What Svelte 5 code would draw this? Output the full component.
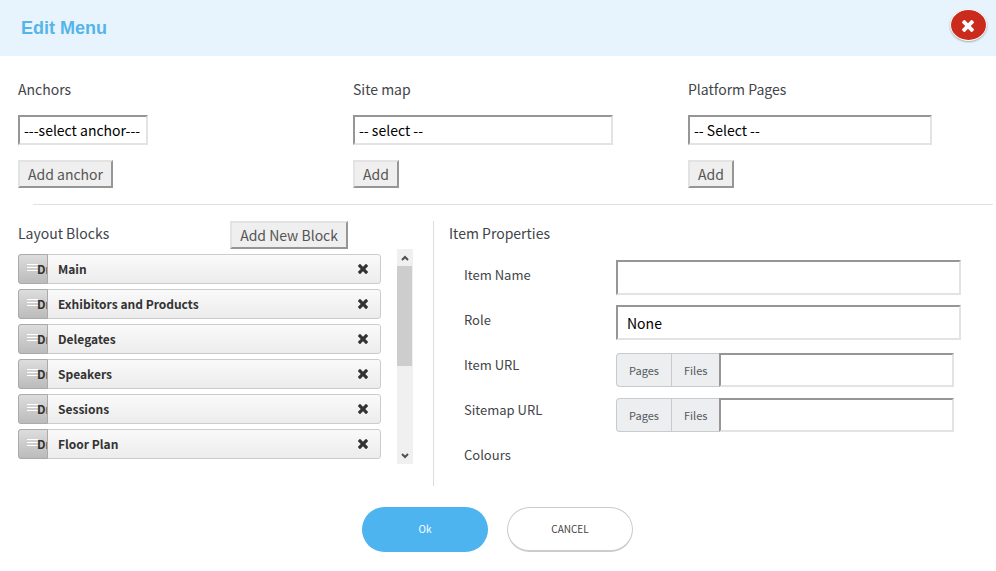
<script lang="ts">
	interface Source {
		id: string;
		label: string;
		placeholder: string;
		action: string;
	}

	const sources: Source[] = [
		{ id: 'anchors', label: 'Anchors', placeholder: '---select anchor---', action: 'Add anchor' },
		{ id: 'sitemap', label: 'Site map', placeholder: '-- select --', action: 'Add' },
		{ id: 'platform', label: 'Platform Pages', placeholder: '-- Select --', action: 'Add' }
	];

	let blocks = $state([
		'Main',
		'Exhibitors and Products',
		'Delegates',
		'Speakers',
		'Sessions',
		'Floor Plan'
	]);

	let itemName = $state('');
	let itemUrl = $state('');
	let sitemapUrl = $state('');

	function removeBlock(index: number) {
		blocks.splice(index, 1);
	}
</script>

{#snippet cross()}
	<svg class="cross" viewBox="302 366 1188 1188" aria-hidden="true">
		<path
			d="M1490 1322q0 40-28 68l-136 136q-28 28-68 28t-68-28l-294-294-294 294q-28 28-68 28t-68-28l-136-136q-28-28-28-68t28-68l294-294-294-294q-28-28-28-68t28-68l136-136q28-28 68-28t68 28l294 294 294-294q28-28 68-28t68 28l136 136q28 28 28 68t-28 68l-294 294 294 294q28 28 28 68z"
		/>
	</svg>
{/snippet}

<div class="dialog" role="dialog" aria-labelledby="dialog-title">
	<header class="dialog-header">
		<h1 id="dialog-title">Edit Menu</h1>
		<button type="button" class="close" aria-label="Close">{@render cross()}</button>
	</header>

	<section class="sources">
		{#each sources as source (source.id)}
			<div class="source">
				<label for={source.id}>{source.label}</label>
				<select id={source.id} class="field select-{source.id}">
					<option>{source.placeholder}</option>
				</select>
				<button type="button" class="btn">{source.action}</button>
			</div>
		{/each}
	</section>

	<hr />

	<div class="editor">
		<section class="layout">
			<div class="layout-head">
				<h2>Layout Blocks</h2>
				<button type="button" class="btn">Add New Block</button>
			</div>
			<div class="scroller">
				<ul class="blocks">
					{#each blocks as block, i (block)}
						<li class="block">
							<span class="handle">
								<svg viewBox="0 0 11 8" aria-hidden="true">
									<path d="M0 .5h11M0 3.5h11M0 6.5h11" />
								</svg>
								<span>Dr</span>
							</span>
							<span class="block-name">{block}</span>
							<button
								type="button"
								class="remove"
								aria-label="Remove {block}"
								onclick={() => removeBlock(i)}
							>
								{@render cross()}
							</button>
						</li>
					{/each}
				</ul>
				<div class="scrollbar" aria-hidden="true">
					<svg viewBox="0 0 8 6"><path d="M1 5l3-3 3 3" /></svg>
					<div class="thumb"></div>
					<svg viewBox="0 0 8 6"><path d="M1 1l3 3 3-3" /></svg>
				</div>
			</div>
		</section>

		<section class="properties">
			<h2>Item Properties</h2>
			<div class="row">
				<label for="item-name">Item Name</label>
				<input id="item-name" class="field" type="text" bind:value={itemName} />
			</div>
			<div class="row">
				<label for="role">Role</label>
				<select id="role" class="field">
					<option>None</option>
				</select>
			</div>
			<div class="row">
				<label for="item-url">Item URL</label>
				<div class="group">
					<button type="button">Pages</button>
					<button type="button">Files</button>
					<input id="item-url" class="field" type="text" bind:value={itemUrl} />
				</div>
			</div>
			<div class="row">
				<label for="sitemap-url">Sitemap URL</label>
				<div class="group">
					<button type="button">Pages</button>
					<button type="button">Files</button>
					<input id="sitemap-url" class="field" type="text" bind:value={sitemapUrl} />
				</div>
			</div>
			<div class="row">
				<span>Colours</span>
			</div>
		</section>
	</div>

	<footer class="dialog-footer">
		<button type="button" class="pill primary">Ok</button>
		<button type="button" class="pill">CANCEL</button>
	</footer>
</div>

<style>
	:global(body) {
		margin: 0;
		background: #fff;
	}

	.dialog,
	.dialog * {
		box-sizing: border-box;
	}

	.dialog {
		font-family: 'Noto Sans CJK SC', 'Open Sans', sans-serif;
		font-size: 14px;
		line-height: 20px;
		color: #414549;
	}

	button,
	select,
	input {
		margin: 0;
		font-family: inherit;
		font-size: inherit;
		line-height: inherit;
	}

	h1,
	h2 {
		margin: 0;
	}

	h2 {
		padding-top: 2px;
		font-size: 14px;
		font-weight: 400;
	}

	/* Header */
	.dialog-header {
		display: flex;
		align-items: center;
		justify-content: space-between;
		height: 56px;
		padding: 0 9px 6px 21px;
		background: #e7f4fd;
	}

	h1 {
		padding-top: 6px;
		font-family: 'Liberation Sans', Arial, sans-serif;
		font-size: 18px;
		font-weight: 700;
		color: #55b5ea;
	}

	.close {
		display: flex;
		align-items: center;
		justify-content: center;
		width: 37px;
		height: 32px;
		padding: 1px 2px 0 0;
		border: 1px solid #fff;
		border-radius: 50%;
		background: #cb2b1d;
		box-shadow: 0 1px 2px rgba(0, 0, 0, 0.3);
	}

	.cross {
		display: block;
		width: 10px;
		height: 10px;
		fill: currentColor;
	}

	.close .cross {
		width: 12px;
		height: 12px;
		color: #fff;
	}

	/* Pickers */
	.sources {
		display: grid;
		grid-template-columns: 335fr 335fr 308fr;
		padding: 23px 0 16px 18px;
	}

	.source {
		display: flex;
		flex-direction: column;
		align-items: flex-start;
	}

	.field {
		appearance: none;
		border: 2px solid;
		border-color: #969696 #e3e3e3 #e3e3e3 #969696;
		border-radius: 0;
		background: #fff;
		color: #000;
		outline: none;
	}

	.source .field {
		height: 30px;
		margin: 16px 0 15px;
		padding: 0 4px;
	}

	.select-anchors {
		width: 130px;
	}

	.select-sitemap {
		width: 260px;
	}

	.select-platform {
		width: 244px;
	}

	.btn {
		height: 28px;
		padding: 0 8px;
		border: 2px solid;
		border-color: #e3e3e3 #969696 #969696 #e3e3e3;
		background: #efefef;
		color: #555;
	}

	hr {
		height: 1px;
		margin: 0 3px 16px 33px;
		border: 0;
		background: #e1e1e1;
	}

	/* Editor */
	.editor {
		display: grid;
		grid-template-columns: 416fr 562fr;
		padding-left: 18px;
	}

	.layout {
		height: 265px;
		border-right: 1px solid #ddd;
	}

	.layout-head {
		display: flex;
		align-items: flex-start;
		justify-content: space-between;
		padding-right: 85px;
	}

	.scroller {
		display: flex;
		justify-content: space-between;
		height: 215px;
		padding-right: 20px;
	}

	.blocks {
		display: flex;
		flex: 1;
		flex-direction: column;
		gap: 5px;
		margin: 0 16px 0 0;
		padding: 5px 0 0;
		list-style: none;
		overflow: hidden;
	}

	.block {
		display: flex;
		flex-shrink: 0;
		align-items: center;
		height: 30px;
		border: 1px solid #ccc;
		border-radius: 3px;
		background: linear-gradient(#fafafa, #ececec);
		font-size: 12px;
		font-weight: 700;
		color: #333;
	}

	.handle {
		display: flex;
		align-items: center;
		width: 30px;
		height: 30px;
		margin-left: -1px;
		padding-left: 8px;
		border: 1px solid #aaa;
		border-radius: 3px 0 0 3px;
		background: linear-gradient(#ddd, #bbb);
		overflow: hidden;
	}

	.handle svg {
		flex-shrink: 0;
		width: 11px;
		height: 8px;
		margin: 0 -1px 2px 0;
		stroke: #fff;
	}

	.block-name {
		flex: 1;
		padding-left: 10px;
	}

	.remove {
		padding: 4px 12px 5px;
		border: 0;
		background: none;
		color: #333;
	}

	.scrollbar {
		display: flex;
		flex-direction: column;
		align-items: center;
		width: 16px;
		padding: 6px 0 5px;
		background: #f0f0f0;
	}

	.scrollbar svg {
		width: 8px;
		height: 6px;
		fill: none;
		stroke: #505050;
		stroke-width: 2;
	}

	.thumb {
		width: 15px;
		height: 100px;
		margin: 5px 1px auto 0;
		background: #cdcdcd;
	}

	/* Properties */
	.properties {
		padding: 0 35px 0 15px;
	}

	.properties h2 {
		margin-bottom: 17px;
	}

	.row {
		display: grid;
		grid-template-columns: 152fr 345fr;
		align-items: start;
		height: 45px;
		padding-left: 15px;
		font-size: 13px;
	}

	.row label,
	.row > span {
		padding-top: 5px;
	}

	.row > .field {
		width: 100%;
		height: 35px;
		padding: 0 9px;
		font-size: 14px;
	}

	.group {
		display: flex;
		height: 34px;
		margin: 3px 7px 0 0;
	}

	.group button {
		padding: 0 12px;
		border: 1px solid #c8cbcd;
		border-right: 0;
		background: #eceef0;
		font-size: 11px;
		color: #55595d;
	}

	.group button:first-child {
		border-radius: 4px 0 0 4px;
	}

	.group .field {
		flex: 1;
		min-width: 0;
		padding: 0 8px;
	}

	/* Footer */
	.dialog-footer {
		display: flex;
		justify-content: center;
		gap: 19px;
		padding: 21px 1px 19px 0;
	}

	.pill {
		width: 126px;
		height: 45px;
		border: 1px solid #ccc;
		border-bottom-width: 2px;
		border-radius: 23px;
		background: #fff;
		font-size: 10px;
		color: #444;
	}

	.pill.primary {
		border-color: #4db4f0;
		background: #4db4f0;
		color: #fff;
	}
</style>
